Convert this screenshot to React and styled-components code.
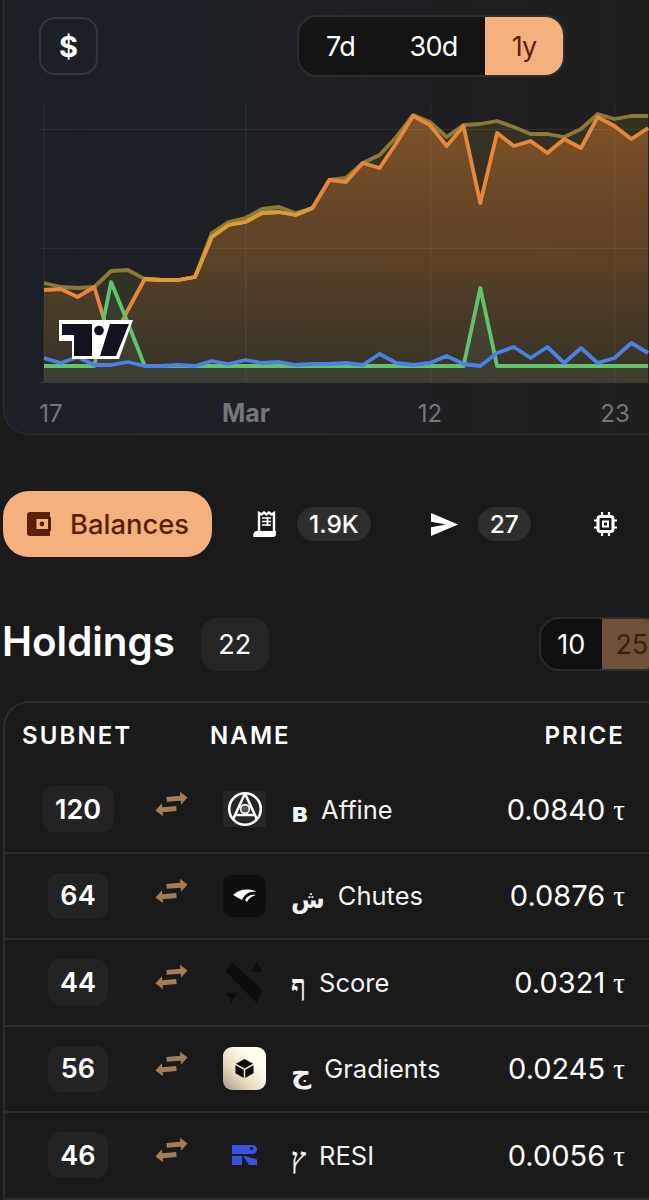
import React from 'react'
import styled, { createGlobalStyle } from 'styled-components'

const GlobalStyle = createGlobalStyle`
  html, body {
    margin: 0;
    padding: 0;
    background: #1a1a1a;
    font-family: Inter, "Noto Sans", sans-serif;
    color: #fff;
  }
`

// daily series, x = 44 + i * step
const step = 16.78
const orange = [290,289,297,287,343,310,279,280,280,277,237,225,222,213,212,215,208,180,182,163,168,143,116,125,146,126,203,133,146,141,153,139,148,117,126,139,128]
const olive = [283,287,288,287,271,270,279,280,280,277,233,222,218,209,207,213,208,180,178,163,155,137,115,122,137,125,124,121,127,134,134,137,129,114,119,116,116]
const green = [366,366,366,366,282,323,366,366,366,366,366,366,366,366,366,366,366,366,366,366,366,366,366,366,366,366,288,366,366,366,366,366,366,366,366,366,366]
const blue = [358,363,357,365,365,362,366,366,365,366,361,364,360,363,362,365,364,364,363,365,354,363,365,363,356,364,366,353,347,358,347,363,348,363,358,343,353]

const BASE = 382
const toPoints = (ys, from = 0) => ys.map((y, i) => `${(44 + (i + from) * step).toFixed(1)},${y}`).join(' ')
const toArea = (ys) => `44,${BASE} ${toPoints(ys)} ${(44 + (ys.length - 1) * step).toFixed(1)},${BASE}`

const holdings = [
  { id: 120, logo: 'affine', symbol: 'в', size: 27, name: 'Affine', price: '0.0840' },
  { id: 64, logo: 'chutes', symbol: 'ش', size: 24.5, name: 'Chutes', price: '0.0876' },
  { id: 44, logo: 'score', symbol: 'ף', size: 29, serif: true, name: 'Score', price: '0.0321' },
  { id: 56, logo: 'gradients', symbol: 'ج', size: 28, name: 'Gradients', price: '0.0245' },
  { id: 46, logo: 'resi', symbol: 'ץ', size: 29, serif: true, name: 'RESI', price: '0.0056' },
]

function Logo({ kind }) {
  if (kind === 'affine') {
    return (
      <LogoBox $bg="#262626" $h={36} $r={2}>
        <svg width="36" height="36" viewBox="0 0 36 36" fill="none" stroke="#fff" strokeWidth="2.6">
          <circle cx="18" cy="18" r="15.8" />
          <path d="M18 2.5 L6 28.5 M18 2.5 L30 28.5 M7.5 24 H28.5" />
          <circle cx="18" cy="18" r="4.4" fill="#555" strokeWidth="1.6" />
        </svg>
      </LogoBox>
    )
  }
  if (kind === 'chutes') {
    return (
      <LogoBox $bg="#0e0e0e" $h={42} $r={9}>
        <svg width="26" height="18" viewBox="0 0 26 18" fill="#fff">
          <path d="M1 8 C6 3 14 1 23 4 L24 5 C17 4 13 7 10 13 Z" />
          <path d="M13 13 C15 9 19 7 24 8 C20 9 17 11 15 15 Z" />
        </svg>
      </LogoBox>
    )
  }
  if (kind === 'score') {
    return (
      <LogoBox $h={42}>
        <svg width="37" height="42" viewBox="0 0 37 42" fill="#0c0c0c">
          <path d="M5.7 0.7 L0 10.7 L22 33 L30.7 41.7 L36.7 29 L14.5 9.5 Z" />
          <path d="M30.7 0.7 L25.7 10.7 H36.3 Z" />
          <path d="M0 31.7 H11.3 L5.7 41.7 Z" />
        </svg>
      </LogoBox>
    )
  }
  if (kind === 'gradients') {
    return (
      <LogoBox $bg="linear-gradient(45deg, #a8978c 0%, #eadbbd 35%, #fffdf0 70%, #fffbe6 100%)" $h={43} $r={9}>
        <svg width="19" height="19" viewBox="0 0 20 20">
          <path d="M10 0 L19 5 L10 10 L1 5 Z M0.5 6.5 L9.2 11.4 V20 L0.5 15 Z M19.5 6.5 L10.8 11.4 V20 L19.5 15 Z" fill="#0a0a0a" />
        </svg>
      </LogoBox>
    )
  }
  return (
    <LogoBox $bg="#1b1b1f" $h={42} $r={9}>
      <svg width="25" height="20" viewBox="0 0 25 20" fill="#3755dc">
        <path d="M0 0 H20 C23.5 0 25 2.5 25 4.5 C25 7 23 9 20 9 H0 Z" />
        <circle cx="19.5" cy="3.6" r="1.6" fill="#1b1b1f" />
        <path d="M0 11 H10 V20 H0 Z" />
        <path d="M11 10.5 L25 14.5 V20 H17 Z" />
      </svg>
    </LogoBox>
  )
}

function SwapIcon() {
  return (
    <svg width="33" height="24" viewBox="0 0 33 24" fill="#a57c5a">
      <g transform="rotate(-5 16 12)">
        <path d="M12 4.5 H26 V0.5 L33 7 L26 13.5 V9.5 H12 Z" />
        <path d="M21 14.5 H7 V10.5 L0 17 L7 23.5 V19.5 H21 Z" />
      </g>
    </svg>
  )
}

export default function App() {
  return (
    <Page>
      <GlobalStyle />
      <ChartCard>
        <Toolbar>
          <CurrencyButton>$</CurrencyButton>
          <RangeGroup>
            <RangeItem $w={83}>7d</RangeItem>
            <RangeItem $w={103}>30d</RangeItem>
            <RangeItem $w={78} $active>1y</RangeItem>
          </RangeGroup>
        </Toolbar>
        <ChartWrap>
          <svg width="645" height="338" viewBox="4 96 645 338">
            <defs>
              <linearGradient id="orangeFill" gradientUnits="userSpaceOnUse" x1="0" y1="115" x2="0" y2="382">
                <stop offset="0" stopColor="#a8662a" stopOpacity="0.64" />
                <stop offset="0.55" stopColor="#83502a" stopOpacity="0.5" />
                <stop offset="1" stopColor="#4a3a2c" stopOpacity="0.2" />
              </linearGradient>
            </defs>
            <polygon points={toArea(olive)} fill="#6e6a2a" fillOpacity="0.26" />
            <polygon points={toArea(orange)} fill="url(#orangeFill)" />
            <polygon points={toArea(green)} fill="#6a8a70" fillOpacity="0.12" />
            <g stroke="#fff" strokeOpacity="0.07" strokeWidth="1">
              <path d="M44 102 V382 M246 102 V382 M431 102 V382 M615 102 V382" />
              <path d="M40 129.5 H649 M40 248.5 H649" />
              <path d="M40 382.5 H649" strokeOpacity="0.12" />
            </g>
            <polyline points={toPoints(olive)} fill="none" stroke="#8b7a35" strokeWidth="3.8" strokeLinejoin="round" />
            <polyline points={toPoints(orange)} fill="none" stroke="#e8873a" strokeWidth="3.8" strokeLinejoin="round" />
            {/* the two price lines run together here and blend to yellow */}
            <polyline points={toPoints(orange.slice(6, 17), 6)} fill="none" stroke="#dd9a38" strokeWidth="3.8" strokeLinejoin="round" />
            <polyline points={toPoints(green)} fill="none" stroke="#5fc46c" strokeWidth="3.8" strokeLinejoin="round" />
            <polyline points={toPoints(blue)} fill="none" stroke="#4a80e8" strokeWidth="3.8" strokeLinejoin="round" />
            <g fontFamily="Inter, sans-serif" fontSize="24" fill="#74767c" textAnchor="middle">
              <text x="51" y="422">17</text>
              <text x="246" y="422" fontWeight="700" fontSize="25">Mar</text>
              <text x="430" y="422">12</text>
              <text x="615" y="422">23</text>
            </g>
          </svg>
          <ChartBadge>
            <svg width="74" height="39" viewBox="0 0 74 39" fill="#12131f">
              <path d="M0 0 H74 L60 39 H13 V21 H0 Z" fill="#fff" />
              <path d="M3 4 H33 V36 H15 V15 H3 Z" />
              <circle cx="40" cy="10.5" r="4.8" />
              <path d="M51 4 H70 L57 36 H41 Z" />
            </svg>
          </ChartBadge>
        </ChartWrap>
      </ChartCard>

      <Tabs>
        <ActiveTab>
          <svg width="24" height="24" viewBox="0 0 24 24" fill="#5b1f0a">
            <path fillRule="evenodd" d="M3 0 H23 V5 H24 V19 H23 V24 H3 C1 24 0 23 0 21 V3 C0 1 1 0 3 0 Z M9.5 7 V17 H21 V7 Z" />
            <circle cx="15" cy="12" r="2.4" />
          </svg>
          Balances
        </ActiveTab>
        <Tab $left={41}>
          <svg width="24" height="26" viewBox="0 0 24 26" fill="none">
            <path d="M0 25.5 C0.5 21 2 20 4 20 H23 V23 C23 25 22 26 20 26 H1 Z" fill="#fff" />
            <path d="M6 21 V2 L8.5 3.5 L11 1.5 L13.5 3.5 L16 1.5 L18.5 3.5 L21 2 V21" stroke="#fff" strokeWidth="2.4" />
            <path d="M9 7 H18 M9 10.5 H18 M9 14 H18 M14.5 6 V15" stroke="#fff" strokeWidth="1.7" />
          </svg>
          <Count>1.9K</Count>
        </Tab>
        <Tab $left={60}>
          <svg width="27" height="23" viewBox="0 0 27 23" fill="#fff">
            <path d="M0 0 L27 11.5 L0 23 V14.2 L15 11.5 L0 8.8 Z" />
          </svg>
          <Count>27</Count>
        </Tab>
        <Tab $left={63}>
          <svg width="23" height="24" viewBox="0 0 23 24" fill="none" stroke="#fff" strokeWidth="3">
            <rect x="4" y="4.5" width="15" height="15" rx="2.5" />
            <rect x="9" y="9.5" width="5" height="5" strokeWidth="2" />
            <path d="M8 0 V3 M15 0 V3 M8 21 V24 M15 21 V24 M0 8.5 H3 M0 15.5 H3 M20 8.5 H23 M20 15.5 H23" strokeWidth="2.2" />
          </svg>
        </Tab>
      </Tabs>

      <HoldingsHeader>
        <Title>Holdings</Title>
        <TotalBadge>22</TotalBadge>
        <PageSize>
          <SizeOption $w={61}>10</SizeOption>
          <SizeOption $w={60} $active>25</SizeOption>
        </PageSize>
      </HoldingsHeader>

      <TableCard>
        <TableHead>
          <HeadCell $w={188}>SUBNET</HeadCell>
          <HeadCell>NAME</HeadCell>
          <HeadCell $right>PRICE</HeadCell>
        </TableHead>
        {holdings.map((row) => (
          <Row key={row.id}>
            <SubnetCell>
              <SubnetBadge>{row.id}</SubnetBadge>
            </SubnetCell>
            <SwapCell>
              <SwapIcon />
            </SwapCell>
            <Logo kind={row.logo} />
            <NameCell>
              <Symbol $size={row.size} $serif={row.serif}>{row.symbol}</Symbol>
              <span>{row.name}</span>
            </NameCell>
            <Price>
              {row.price} <Tao>τ</Tao>
            </Price>
          </Row>
        ))}
      </TableCard>
    </Page>
  )
}

const Page = styled.div`
  width: 649px;
  height: 1200px;
  overflow: hidden;
  background: #1a1a1a;
`

const ChartCard = styled.section`
  box-sizing: border-box;
  width: 680px;
  height: 435px;
  margin-left: 3px;
  border: 1px solid #2e3033;
  border-top: none;
  border-radius: 0 0 26px 26px;
  background: linear-gradient(90deg, #1c2027 0%, #1e2025 45%, #211e1d 100%);
`

const Toolbar = styled.div`
  display: flex;
  align-items: center;
  justify-content: space-between;
  width: 526px;
  padding: 16px 0 0 35px;
  height: 60px;
`

const CurrencyButton = styled.div`
  box-sizing: border-box;
  width: 59px;
  height: 58px;
  display: flex;
  align-items: center;
  justify-content: center;
  border: 2px solid #34373c;
  border-radius: 16px;
  font-size: 29px;
  font-weight: 700;
`

const RangeGroup = styled.div`
  display: flex;
  height: 58px;
  border: 2px solid #2c2e31;
  border-radius: 20px;
  background: #141414;
  overflow: hidden;
`

const RangeItem = styled.div`
  width: ${(p) => p.$w}px;
  display: flex;
  align-items: center;
  justify-content: center;
  font-size: 27px;
  letter-spacing: -0.8px;
  color: ${(p) => (p.$active ? '#5b1f0a' : '#fff')};
  background: ${(p) => (p.$active ? '#f4b07d' : 'transparent')};
`

const ChartWrap = styled.div`
  position: relative;
  margin-top: 20px;
  height: 338px;
  svg {
    display: block;
  }
`

const ChartBadge = styled.div`
  position: absolute;
  left: 55px;
  top: 224px;
`

const Tabs = styled.nav`
  display: flex;
  align-items: center;
  margin: 56px 0 0 3px;
  height: 66px;
`

const ActiveTab = styled.div`
  box-sizing: border-box;
  width: 209px;
  height: 66px;
  display: flex;
  align-items: center;
  gap: 19px;
  padding-left: 24px;
  border-radius: 26px;
  background: #f4b07d;
  color: #5b1f0a;
  font-size: 27.4px;
  font-weight: 500;
`

const Tab = styled.div`
  display: flex;
  align-items: center;
  gap: 20px;
  margin-left: ${(p) => p.$left}px;
`

const Count = styled.span`
  height: 34px;
  padding: 0 12px;
  display: flex;
  align-items: center;
  border-radius: 17px;
  background: #2e2e2e;
  font-size: 24.5px;
  font-weight: 500;
`

const HoldingsHeader = styled.div`
  display: flex;
  align-items: center;
  height: 54px;
  margin: 60px 0 0 2px;
  width: 700px;
`

const Title = styled.h2`
  margin: 0 0 5px;
  font-size: 40.3px;
  font-weight: 600;
`

const TotalBadge = styled.span`
  width: 68px;
  height: 53px;
  margin-left: 26px;
  display: flex;
  align-items: center;
  justify-content: center;
  border-radius: 16px;
  background: #262626;
  font-size: 27px;
`

const PageSize = styled.div`
  display: flex;
  height: 54px;
  margin-left: 270px;
  box-sizing: border-box;
  border: 2px solid #2c2c2c;
  border-radius: 20px;
  overflow: hidden;
  background: #101010;
`

const SizeOption = styled.div`
  width: ${(p) => p.$w}px;
  display: flex;
  align-items: center;
  justify-content: center;
  font-size: 27px;
  color: ${(p) => (p.$active ? '#3a2212' : '#fff')};
  background: ${(p) => (p.$active ? '#6f5038' : 'transparent')};
`

const TableCard = styled.section`
  box-sizing: border-box;
  width: 680px;
  margin: 30px 0 0 3px;
  border: 2px solid #2e2e2e;
  border-bottom: none;
  border-right: none;
  border-radius: 26px 0 0 0;
`

const TableHead = styled.div`
  display: flex;
  align-items: center;
  height: 64px;
  padding: 0 58px 0 17px;
`

const HeadCell = styled.div`
  width: ${(p) => (p.$w ? `${p.$w}px` : 'auto')};
  margin-left: ${(p) => (p.$right ? 'auto' : '0')};
  font-size: 24px;
  font-weight: 600;
  letter-spacing: 2.1px;
`

const Row = styled.div`
  display: flex;
  align-items: center;
  height: 86.5px;
  box-sizing: border-box;
  padding-right: 58px;
  border-bottom: 2px solid #2c2c2c;
`

const SubnetCell = styled.div`
  width: 146px;
  display: flex;
  justify-content: center;
`

const SubnetBadge = styled.span`
  height: 46px;
  padding: 0 12.5px;
  display: flex;
  align-items: center;
  border-radius: 12px;
  background: #232323;
  font-size: 27px;
  font-weight: 600;
`

const SwapCell = styled.div`
  width: 72px;
  padding-left: 4px;
  box-sizing: border-box;
  display: flex;
  margin-top: -10px;
`

const LogoBox = styled.div`
  width: 43px;
  height: ${(p) => p.$h}px;
  flex: none;
  display: flex;
  align-items: center;
  justify-content: center;
  border-radius: ${(p) => p.$r || 0}px;
  background: ${(p) => p.$bg || 'transparent'};
`

const NameCell = styled.div`
  display: flex;
  align-items: center;
  gap: 13px;
  margin-left: 25px;
  font-size: 25.5px;
  color: #f2f2f2;
`

const Symbol = styled.span`
  margin-top: 7px;
  font-family: ${(p) => (p.$serif ? '"Liberation Serif", serif' : '"DejaVu Sans", "Liberation Serif", serif')};
  font-size: ${(p) => p.$size}px;
  font-weight: 700;
`

const Price = styled.div`
  margin-left: auto;
  font-size: 29px;
`

const Tao = styled.span`
  font-family: "Liberation Serif", serif;
  font-size: 29px;
`
